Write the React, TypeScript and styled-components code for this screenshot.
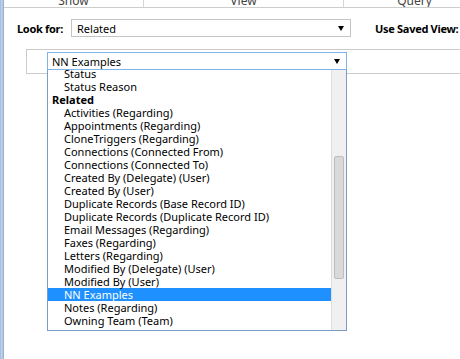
import React from 'react'
import styled, { createGlobalStyle } from 'styled-components'

const GlobalStyle = createGlobalStyle`
    html, body {
        margin: 0;
        padding: 0;
        background: #fff;
    }
    body {
        font-family: "Noto Sans", "Open Sans", "Liberation Sans", sans-serif;
        font-size: 11px;
        color: #000;
    }
`

const Frame = styled.div`
    display: flex;
    width: 460px;
    height: 359px;
    overflow: hidden;
`

const WindowEdge = styled.div`
    width: 4px;
    flex: none;
    background: linear-gradient(to right, #9fb9d8 0%, #c3d6ec 45%, #8ea8c8 100%);
`

const Pane = styled.div`
    flex: 1;
    min-width: 0;
    display: flex;
    flex-direction: column;
    overflow: hidden;
`

const TabHeader = styled.div`
    display: grid;
    grid-template-columns: 139px 200px 142px;
    height: 7px;
    border-bottom: 1px solid #cdcdcd;
`

const TabCell = styled.div<{ $first?: boolean }>`
    display: flex;
    align-items: flex-end;
    justify-content: center;
    overflow: hidden;
    border-left: ${p => (p.$first ? 'none' : '1px solid #d6d6d6')};
    color: #444;
    font-size: 12px;
    line-height: 14px;

    span {
        margin-bottom: -1px;
    }
`

const LookForRow = styled.div`
    display: flex;
    align-items: center;
    margin-top: 11px;
    padding-left: 13px;
`

const Label = styled.span`
    font-weight: bold;
    font-size: 11px;
    letter-spacing: -0.3px;
    white-space: nowrap;
`

const Select = styled.div`
    box-sizing: border-box;
    display: flex;
    align-items: center;
    justify-content: space-between;
    width: 280px;
    height: 18px;
    margin: 0 24px 0 8px;
    padding: 0 6px 0 5px;
    border: 1px solid #c4c4c4;
    background: #fff;
`

const Arrow = styled.span`
    width: 0;
    height: 0;
    border-left: 3px solid transparent;
    border-right: 3px solid transparent;
    border-top: 5px solid #000;
`

const SavedViewBox = styled.div`
    box-sizing: border-box;
    height: 25px;
    margin: 12px 0 0 22px;
    padding: 2px 0 0 20px;
    border: 1px solid #cbcbcb;
    border-right: none;
`

const ComboWrap = styled.div`
    position: relative;
    width: 300px;
`

const Combo = styled(Select)`
    width: 300px;
    margin: 0;
    padding: 0 6px 0 4px;
    border-color: #7eb4ea;
`

const DropList = styled.div`
    position: absolute;
    top: 18px;
    left: 0;
    box-sizing: border-box;
    width: 300px;
    height: 261px;
    display: flex;
    background: #fff;
    border: 1px solid #7d9cc4;
    border-top: none;
`

const ListBody = styled.div`
    flex: 1;
    overflow: hidden;
`

const ListScroll = styled.div`
    margin-top: -3px;
`

const Option = styled.div<{ $group?: boolean; $selected?: boolean }>`
    height: 13px;
    line-height: 13px;
    padding-left: ${p => (p.$group ? '4px' : '16px')};
    font-weight: ${p => (p.$group ? 'bold' : 'normal')};
    white-space: nowrap;
    background: ${p => (p.$selected ? '#1e90ff' : 'transparent')};
    color: ${p => (p.$selected ? '#fff' : '#000')};
`

const ScrollTrack = styled.div`
    box-sizing: border-box;
    width: 15px;
    flex: none;
    padding: 86px 0 0 2px;
    background: #f0f0f0;
    border-left: 1px solid #dcdcdc;
`

const ScrollThumb = styled.div`
    box-sizing: border-box;
    width: 10px;
    height: 123px;
    background: #d9d9d9;
    border: 1px solid #bdbdbd;
    border-radius: 2px;
`

const options: { text: string; group?: boolean }[] = [
    { text: 'Status' },
    { text: 'Status Reason' },
    { text: 'Related', group: true },
    { text: 'Activities (Regarding)' },
    { text: 'Appointments (Regarding)' },
    { text: 'CloneTriggers (Regarding)' },
    { text: 'Connections (Connected From)' },
    { text: 'Connections (Connected To)' },
    { text: 'Created By (Delegate) (User)' },
    { text: 'Created By (User)' },
    { text: 'Duplicate Records (Base Record ID)' },
    { text: 'Duplicate Records (Duplicate Record ID)' },
    { text: 'Email Messages (Regarding)' },
    { text: 'Faxes (Regarding)' },
    { text: 'Letters (Regarding)' },
    { text: 'Modified By (Delegate) (User)' },
    { text: 'Modified By (User)' },
    { text: 'NN Examples' },
    { text: 'Notes (Regarding)' },
    { text: 'Owning Team (Team)' },
    { text: 'Owning User (User)' },
]

export default function App() {
    const selected = 'NN Examples'

    return (
        <>
            <GlobalStyle />
            <Frame>
                <WindowEdge />
                <Pane>
                    <TabHeader>
                        <TabCell $first><span>Show</span></TabCell>
                        <TabCell><span>View</span></TabCell>
                        <TabCell><span>Query</span></TabCell>
                    </TabHeader>

                    <LookForRow>
                        <Label>Look for:</Label>
                        <Select>
                            <span>Related</span>
                            <Arrow />
                        </Select>
                        <Label>Use Saved View:</Label>
                    </LookForRow>

                    <SavedViewBox>
                        <ComboWrap>
                            <Combo>
                                <span>{selected}</span>
                                <Arrow />
                            </Combo>
                            <DropList>
                                <ListBody>
                                    <ListScroll>
                                        {options.map(o => (
                                            <Option key={o.text} $group={o.group} $selected={o.text === selected}>
                                                {o.text}
                                            </Option>
                                        ))}
                                    </ListScroll>
                                </ListBody>
                                <ScrollTrack>
                                    <ScrollThumb />
                                </ScrollTrack>
                            </DropList>
                        </ComboWrap>
                    </SavedViewBox>
                </Pane>
            </Frame>
        </>
    )
}
